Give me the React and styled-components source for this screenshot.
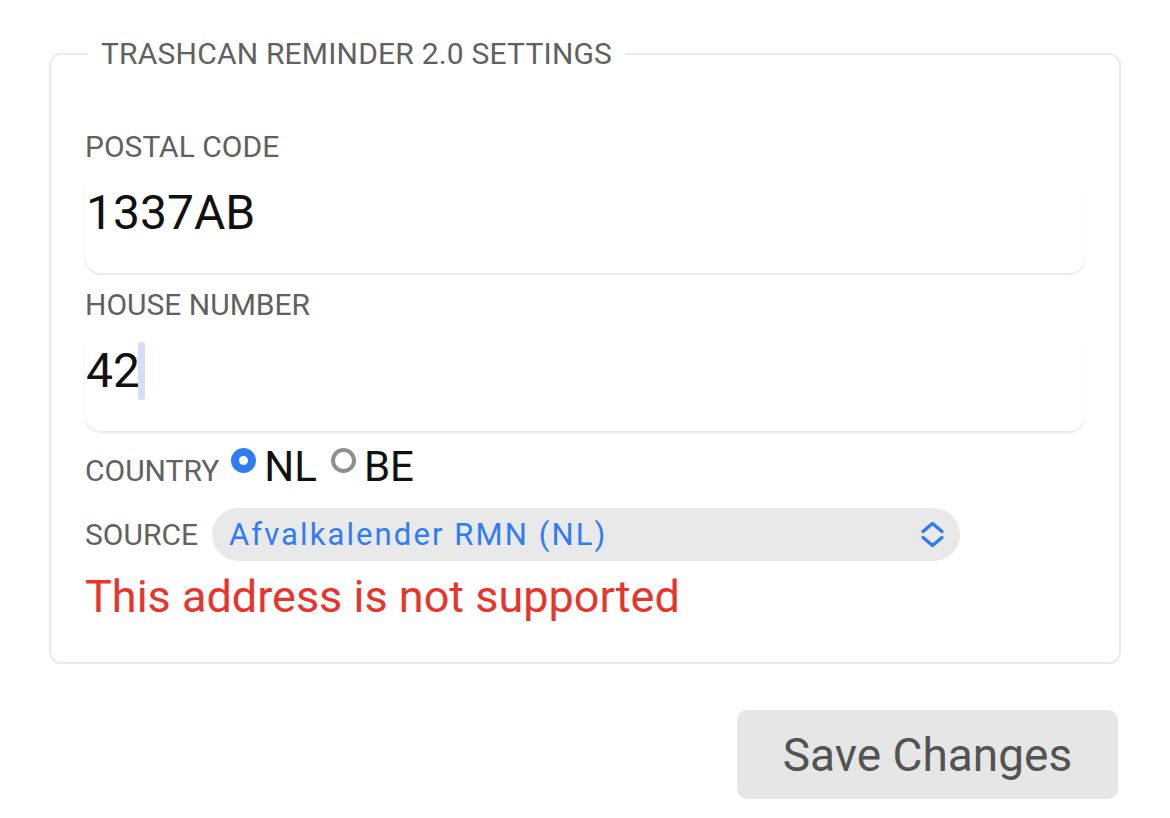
import React from "react";
import styled, { createGlobalStyle } from "styled-components";

const GlobalStyle = createGlobalStyle`
  html, body {
    margin: 0;
    padding: 0;
    background: #ffffff;
    font-family: Roboto, "Liberation Sans", sans-serif;
  }
`;

const Page = styled.div`
  padding: 36px 49px 0;
  display: flex;
  flex-direction: column;
`;

const Fieldset = styled.fieldset`
  margin: 0;
  border: 2px solid #ebebeb;
  border-radius: 12px;
  padding: 57px 34px 38px;
  display: flex;
  flex-direction: column;
  min-width: 0;
`;

const Legend = styled.legend`
  margin-left: 3px;
  padding: 0 13px;
  font-size: 30px;
  line-height: 36px;
  letter-spacing: 0.2px;
  color: #616161;
  text-transform: uppercase;
`;

const FieldGroup = styled.div`
  display: flex;
  flex-direction: column;
  margin-bottom: ${(p) => p.$mb || 0}px;
`;

const Label = styled.label`
  font-size: 30px;
  line-height: 36px;
  color: #616161;
  text-transform: uppercase;
`;

const TextBox = styled.div`
  margin-top: 10px;
  height: 98px;
  box-sizing: border-box;
  padding: 9px 0 0 1px;
  background: #ffffff;
  border-radius: 16px;
  box-shadow: 0 2px 2px rgba(0, 0, 0, 0.09), 0 0 1px rgba(0, 0, 0, 0.03);
  font-size: 48px;
  line-height: 58px;
  color: #111111;
  display: flex;
  align-items: flex-start;
`;

const Caret = styled.span`
  display: inline-block;
  width: 7px;
  height: 58px;
  margin-left: -2px;
  border-radius: 4px;
  background: #d5ddfa;
`;

const Row = styled.div`
  display: flex;
  align-items: ${(p) => p.$align || "center"};
  gap: ${(p) => p.$gap || 0}px;
  margin-top: ${(p) => p.$mt || 0}px;
`;

const RowLabel = styled.span`
  font-size: 30px;
  line-height: 36px;
  color: #616161;
  text-transform: uppercase;
`;

const RadioOption = styled.label`
  display: inline-flex;
  align-items: baseline;
  font-size: 42px;
  line-height: 48px;
  color: #111111;
  margin-left: ${(p) => p.$ml || 0}px;
`;

const RadioCircle = styled.span`
  box-sizing: border-box;
  align-self: flex-start;
  width: 25px;
  height: 25px;
  border-radius: 50%;
  background: #ffffff;
  border: ${(p) => (p.$checked ? "8px solid #2f7cf6" : "4px solid #8e8e8e")};
  margin: 5px 8px 0 0;
`;

const Select = styled.div`
  box-sizing: border-box;
  width: 748px;
  height: 53px;
  border-radius: 27px;
  background: #e9e9e9;
  padding: 0 14px 0 17px;
  display: flex;
  align-items: center;
  justify-content: space-between;
  color: #2f7cf6;
  font-size: 31px;
  letter-spacing: 2.1px;
`;

const ErrorText = styled.div`
  margin-top: 9px;
  font-size: 45px;
  line-height: 54px;
  color: #e8352b;
`;

const Actions = styled.div`
  display: flex;
  justify-content: flex-end;
  padding-right: 3px;
  margin-top: 46px;
`;

const SaveButton = styled.button`
  width: 381px;
  height: 89px;
  border: none;
  border-radius: 10px;
  background: #e6e6e6;
  color: #535353;
  font-family: Roboto, "Liberation Sans", sans-serif;
  font-size: 46px;
  padding: 0;
  cursor: pointer;
`;

const Chevrons = () => (
  <svg width="27" height="27" viewBox="0 0 27 27" fill="none">
    <path d="M4 10.5 L13.5 2.5 L23 10.5" stroke="#2f7cf6" strokeWidth="3.4" strokeLinecap="round" strokeLinejoin="round" />
    <path d="M4 16.5 L13.5 24.5 L23 16.5" stroke="#2f7cf6" strokeWidth="3.4" strokeLinecap="round" strokeLinejoin="round" />
  </svg>
);

export default function App() {
  return (
    <>
      <GlobalStyle />
      <Page>
        <Fieldset>
          <Legend>Trashcan Reminder 2.0 Settings</Legend>
          <FieldGroup $mb={14}>
            <Label>Postal code</Label>
            <TextBox>1337AB</TextBox>
          </FieldGroup>
          <FieldGroup>
            <Label>House number</Label>
            <TextBox>
              42
              <Caret />
            </TextBox>
          </FieldGroup>
          <Row $mt={12} $align="baseline">
            <RowLabel>Country</RowLabel>
            <RadioOption $ml={12}>
              <RadioCircle $checked />
              NL
            </RadioOption>
            <RadioOption $ml={14}>
              <RadioCircle />
              BE
            </RadioOption>
          </Row>
          <Row $mt={17} $gap={14}>
            <RowLabel>Source</RowLabel>
            <Select>
              <span>Afvalkalender RMN (NL)</span>
              <Chevrons />
            </Select>
          </Row>
          <ErrorText>This address is not supported</ErrorText>
        </Fieldset>
        <Actions>
          <SaveButton>Save Changes</SaveButton>
        </Actions>
      </Page>
    </>
  );
}
